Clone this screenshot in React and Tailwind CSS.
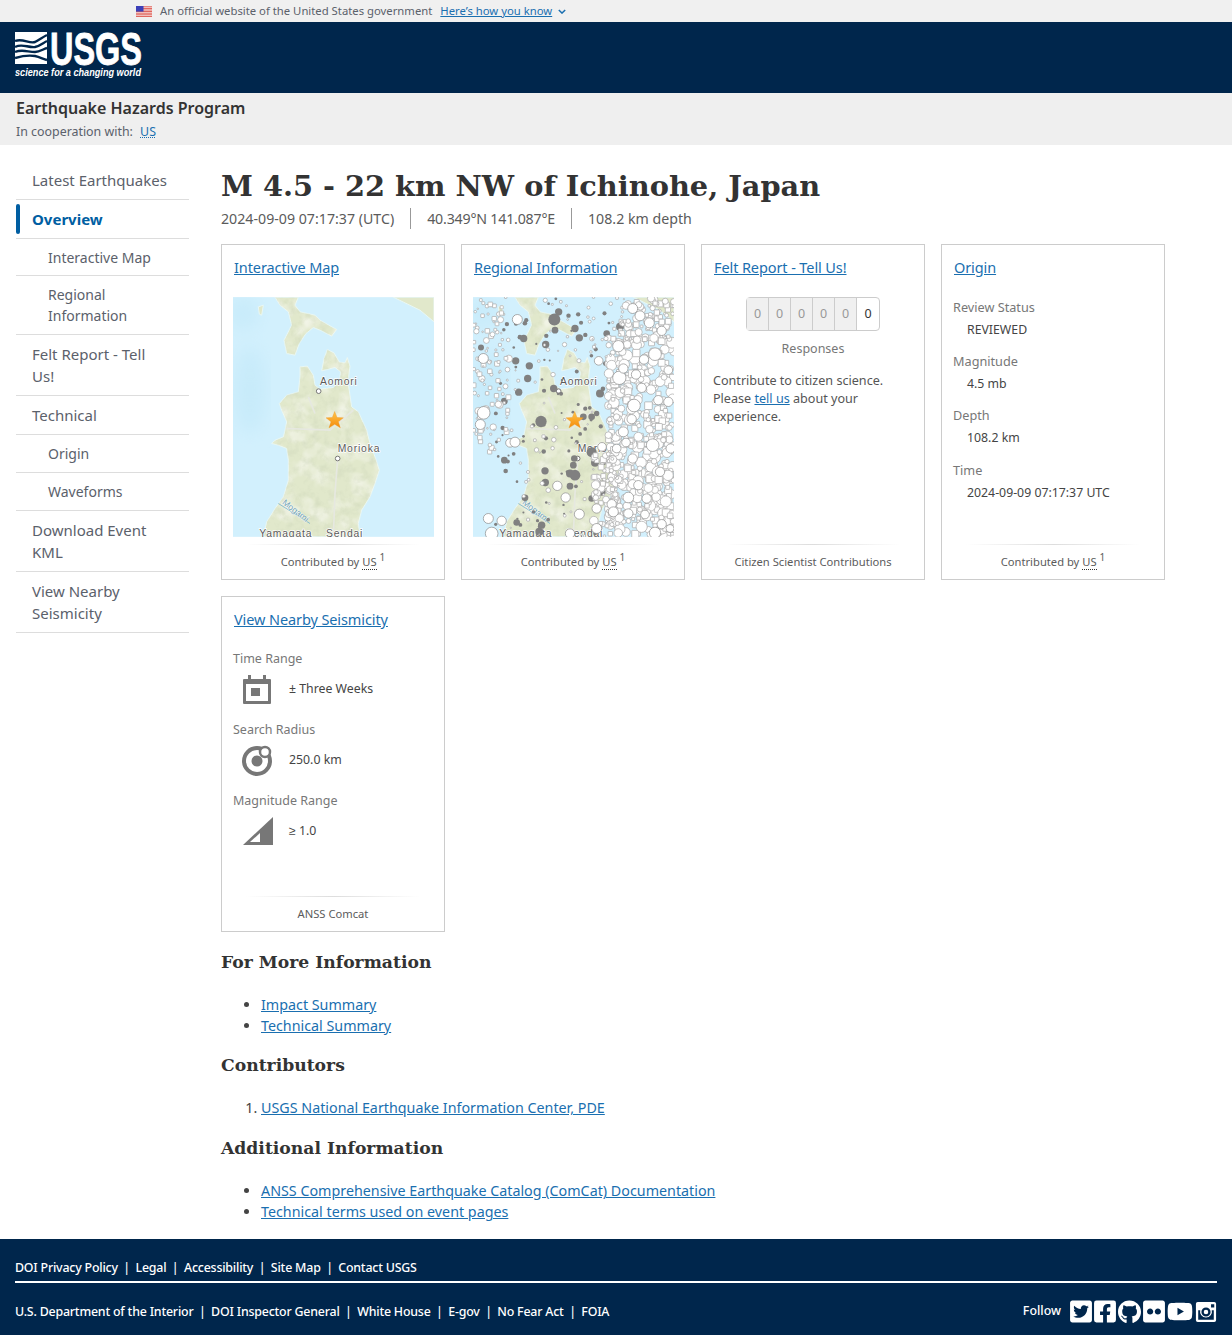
import { FaTwitterSquare, FaFacebookSquare, FaGithub, FaFlickr, FaYoutube } from 'react-icons/fa'

const sans = 'font-["Noto_Sans",sans-serif]'

// small seeded generator so the catalog dots stay the same on every load
let seed = 7
const rnd = () => {
  seed = (seed * 16807) % 2147483647
  return seed / 2147483647
}
const between = (a, b) => a + rnd() * (b - a)

const fillerWhite = []
const scatter = (count, x0, x1, y0, y1, r0, r1, squares) => {
  for (let i = 0; i < count; i++) {
    const square = rnd() < squares
    const r = between(r0, r1)
    fillerWhite.push([between(x0, x1), between(y0, y1), square ? r * 0.7 : r, square])
  }
}
scatter(520, 445, 642, 290, 890, 6, 17, 0.4)
scatter(90, 480, 642, 171, 300, 4, 13, 0.5)
scatter(90, 400, 480, 640, 890, 4, 13, 0.5)
scatter(110, 39, 150, 171, 640, 3, 11, 0.7)
scatter(35, 250, 500, 171, 350, 2, 7, 0.5)
scatter(40, 150, 400, 350, 890, 2, 7, 0.6)

const fillerGray = []
for (let i = 0; i < 85; i++) fillerGray.push([between(100, 470), between(175, 880), between(3, 7)])

const grayDots = [
  [283, 238, 18], [296, 215, 11], [191, 295, 11], [257, 313, 11], [345, 265, 11], [358, 293, 11], [285, 270, 10],
  [167, 362, 11], [208, 377, 11], [203, 415, 11], [176, 456, 11], [63, 322, 9], [133, 483, 10], [281, 445, 11],
  [243, 544, 17], [133, 660, 10], [395, 636, 15], [345, 705, 16], [330, 700, 12], [343, 655, 10], [340, 675, 10],
  [405, 668, 12], [430, 665, 10], [255, 692, 11], [256, 727, 11], [330, 738, 10], [245, 855, 11], [238, 875, 12],
  [170, 847, 10], [195, 773, 10], [395, 775, 10], [425, 755, 12], [463, 443, 15], [420, 460, 12], [370, 530, 10],
  [395, 530, 10], [410, 520, 8], [480, 260, 12], [440, 280, 10],
]

const whiteDots = [
  [172, 238, 15], [71, 518, 19], [61, 553, 15], [70, 355, 15], [150, 608, 13], [165, 606, 15], [518, 205, 15],
  [540, 227, 15], [568, 248, 15], [605, 272, 14], [475, 318, 17], [585, 342, 19], [552, 358, 14], [478, 413, 20],
  [490, 385, 14], [528, 403, 14], [522, 496, 19], [545, 443, 14], [595, 480, 14], [625, 485, 14], [515, 537, 14],
  [490, 575, 15], [578, 615, 19], [498, 607, 13], [470, 625, 13], [518, 655, 14], [600, 695, 14], [535, 735, 14],
  [560, 775, 14], [505, 772, 16], [455, 792, 14], [460, 815, 15], [505, 820, 14], [555, 823, 13], [605, 852, 14],
  [585, 878, 17], [630, 865, 12], [410, 805, 14], [358, 822, 15], [330, 880, 14], [410, 865, 15], [85, 835, 15],
  [125, 842, 14], [95, 880, 19], [292, 737, 14], [317, 772, 14], [426, 620, 13], [416, 362, 13], [632, 625, 14],
  [625, 390, 13],
]

const honshu =
  'M240 380 262 378 280 405 285 435 300 447 340 442 358 425 362 395 345 382 305 392 312 355 322 328 342 338 358 366 375 368 382 352 390 378 384 425 395 500 415 515 440 570 450 610 465 650 478 690 465 730 450 770 425 810 415 850 420 890 130 890 140 845 165 805 190 770 205 720 205 660 200 625 175 615 155 610 165 600 190 590 195 570 200 545 185 510 178 490 200 465 235 455 240 410Z'
const hokkaido =
  'M165 171 235 171 225 195 240 215 285 225 300 240 350 268 335 288 305 272 280 262 258 280 238 310 225 345 200 340 192 300 215 255 205 215 180 195Z'

function QuakeMap({ id, seismicity }) {
  return (
    <svg viewBox="39 171 603 719" className="block w-[201px] h-[240px] mx-auto">
      <defs>
        <clipPath id={`land-${id}`}>
          <path d={honshu} />
          <path d={hokkaido} />
        </clipPath>
        <filter id={`terrain-${id}`}>
          <feTurbulence type="fractalNoise" baseFrequency="0.04" numOctaves="4" seed="4" />
          <feColorMatrix values="0 0 0 0 0.6  0 0 0 0 0.66  0 0 0 0 0.48  1.1 0 0 0 -0.5" />
        </filter>
        <filter id={`pale-${id}`}>
          <feTurbulence type="fractalNoise" baseFrequency="0.018" numOctaves="3" seed="11" />
          <feColorMatrix values="0 0 0 0 0.96  0 0 0 0 0.96  0 0 0 0 0.92  1.6 0 0 0 -0.7" />
        </filter>
        <filter id={`soft-${id}`}>
          <feGaussianBlur stdDeviation="26" />
        </filter>
        <filter id={`edge-${id}`}>
          <feGaussianBlur stdDeviation="1.5" />
        </filter>
        <linearGradient id={`star-${id}`} x1="0" y1="0" x2="0" y2="1">
          <stop offset="0" stopColor="#ffc64a" />
          <stop offset="1" stopColor="#f58a0b" />
        </linearGradient>
      </defs>
      <rect x="39" y="171" width="603" height="719" fill="#d2f0fd" />
      <g filter={`url(#soft-${id})`} fill="#c8ebfa">
        <ellipse cx="90" cy="450" rx="50" ry="130" />
        <ellipse cx="70" cy="220" rx="45" ry="50" />
      </g>
      <g filter={`url(#edge-${id})`} fill="#e1e8cb" stroke="#e8f7f4" strokeWidth="3">
        <path d={hokkaido} />
        <path d="M520 171 642 171 642 245 600 210Z" />
        <path d="M115 200 130 195 125 225 118 222Z" />
        <path d={honshu} />
      </g>
      <g clipPath={`url(#land-${id})`}>
        <rect x="39" y="171" width="603" height="719" filter={`url(#pale-${id})`} />
        <rect x="39" y="171" width="603" height="719" filter={`url(#terrain-${id})`} />
        <path d="M353 655 345 760 340 890M200 565 330 570 400 510M265 470 285 520" stroke="#e6e8e0" strokeWidth="5" fill="none" />
      </g>
      <path d="M175 790 215 815 270 850" stroke="#8dbfd0" strokeWidth="3" fill="none" />
      <g fontFamily="'Liberation Sans',sans-serif" fontSize="31" fill="#5a5a5a" stroke="#fff" strokeWidth="4" paintOrder="stroke" letterSpacing="2.5">
        <text x="300" y="435">Aomori</text>
        <text x="353" y="637">Morioka</text>
        <text x="118" y="892">Yamagata</text>
        <text x="318" y="892">Sendai</text>
      </g>
      <text x="185" y="790" transform="rotate(38 185 790)" fontFamily="'Liberation Sans',sans-serif" fontSize="26" fill="#6d9fb3" stroke="#fff" strokeWidth="2" paintOrder="stroke">Mogami</text>
      <circle cx="296" cy="453" r="7" fill="#fff" stroke="#777" strokeWidth="3" />
      <circle cx="353" cy="655" r="7" fill="#fff" stroke="#777" strokeWidth="3" />
      {seismicity && (
        <g>
          {fillerGray.map(([x, y, r], i) => (
            <circle key={i} cx={x} cy={y} r={r} fill="#808080" />
          ))}
          {grayDots.map(([x, y, r], i) => (
            <circle key={i} cx={x} cy={y} r={r} fill="#808080" />
          ))}
          {fillerWhite.map(([x, y, r, square], i) =>
            square ? (
              <rect key={i} x={x - r} y={y - r} width={r * 2} height={r * 2} rx="1.5" fill="#fff" stroke="#a5a5a5" strokeWidth="2" />
            ) : (
              <circle key={i} cx={x} cy={y} r={r} fill="#fff" stroke="#a5a5a5" strokeWidth="2" />
            ),
          )}
          {whiteDots.map(([x, y, r], i) => (
            <circle key={i} cx={x} cy={y} r={r} fill="#fff" stroke="#888" strokeWidth="2" />
          ))}
        </g>
      )}
      <path d="M344 514 351 532 370 533 355 545 361 563 344 552 327 563 333 545 318 533 337 532Z" fill={`url(#star-${id})`} stroke="#e98f1c" strokeWidth="1" />
    </svg>
  )
}

function Card({ title, footer, children }) {
  return (
    <div className="w-[224px] h-[336px] border border-[#cccccc] flex flex-col">
      <a href="#" className="ml-3 mt-[11px] text-[#1a6fb0] underline text-[14.5px] tracking-[-0.1px] leading-[22px]">{title}</a>
      <div className="flex-1 mt-[19px] px-[11px]">{children}</div>
      <div className="mx-6 h-px bg-gradient-to-r from-transparent via-[#dddddd] to-transparent" />
      <div className="h-[34px] flex items-center justify-center text-[11.2px] text-[#5b5b5b] pt-[1px]">{footer}</div>
    </div>
  )
}

function ContributedBy() {
  return (
    <span>
      Contributed by <abbr className="no-underline border-b border-dotted border-[#333]" title="US">US</abbr>
      <sup className="ml-[3px] text-[10px]">1</sup>
    </span>
  )
}

function Nav({ sub, active, tight, children }) {
  return (
    <a
      href="#"
      className={`relative block border-b border-[#dddddd] pr-[20px] ${sub ? `pl-8 pt-[8px] text-[14px] leading-[21px] ${tight ? 'pb-[7px]' : 'pb-[8px]'}` : 'pl-4 py-[8px] text-[15px] leading-[22px]'} ${active ? 'font-bold text-[#005ea2]' : 'text-[#5b616b]'}`}
    >
      {active && <span className="absolute left-0 top-1 bottom-1 w-1 rounded-sm bg-[#005ea2]" />}
      {children}
    </a>
  )
}

function Stat({ label, value, top }) {
  return (
    <div className={top}>
      <div className="text-[#777777] text-[12.7px] leading-[18px]">{label}</div>
      <div className="text-[#444444] text-[12.3px] leading-[18px] mt-[5px] pl-[14px]">{value}</div>
    </div>
  )
}

function SectionLink({ children }) {
  return <a href="#" className="text-[#1a6fb0] underline">{children}</a>
}

function Heading({ children, className }) {
  return <h2 className={`font-["DejaVu_Serif",serif] font-bold text-[#333333] text-[17.2px] leading-[26px] ${className}`}>{children}</h2>
}

function FooterLinks({ items }) {
  return (
    <div className="flex items-center text-white text-[12.4px] leading-[18px] font-medium tracking-[-0.2px]">
      {items.map((t, i) => (
        <span key={t} className="flex items-center">
          {i > 0 && <span className="mx-[5.5px]">|</span>}
          <a href="#">{t}</a>
        </span>
      ))}
    </div>
  )
}

export default function App() {
  return (
    <div className={`${sans} bg-white min-h-screen`}>
      {/* gov banner */}
      <div className="h-[22px] bg-[#f0f0f0] flex items-center pl-[136px] text-[11.3px] text-[#5b616b]">
        <svg viewBox="0 0 16 11" className="w-4 h-[11px] mr-2">
          <rect width="16" height="11" fill="#fff" />
          <path d="M0 .8h16M0 2.4h16M0 4h16M0 5.6h16M0 7.2h16M0 8.8h16M0 10.4h16" stroke="#d8433a" strokeWidth="0.9" />
          <rect width="7.5" height="5.6" fill="#3b3fb8" />
        </svg>
        <span>An official website of the United States government</span>
        <a href="#" className="ml-2 text-[#1a6fb0] underline">Here’s how you know</a>
        <svg viewBox="0 0 10 6" className="w-[8px] h-[5px] ml-[6px]" fill="none" stroke="#1a6fb0" strokeWidth="1.8">
          <path d="M1 1l4 4 4-4" />
        </svg>
      </div>

      {/* usgs header */}
      <div className="h-[71px] bg-[#00264c] pl-[15px] pt-[9px]">
        <svg viewBox="0 0 127 47" className="w-[127px] h-[47px]">
          <rect x="0" y="1" width="32" height="32" fill="#fff" />
          <g fill="none" stroke="#00264c" strokeWidth="2.4">
            <path d="M0 10C8 7 14 13 20 11 24 9 28 6 32 4" />
            <path d="M0 16C7 12 13 17 20 16 25 15 28 12 32 10" />
            <path d="M0 21C7 18 13 21 20 21 25 21 28 18 32 17" />
            <path d="M0 27C7 25 13 24 20 25 25 26 28 28 32 29" />
          </g>
          <text x="35" y="33.5" textLength="92" lengthAdjust="spacingAndGlyphs" fontFamily="'Liberation Sans',sans-serif" fontWeight="700" fontSize="46" fill="#fff" stroke="#fff" strokeWidth="0.8">USGS</text>
          <text x="0" y="45" textLength="126" lengthAdjust="spacingAndGlyphs" fontFamily="'Liberation Sans',sans-serif" fontWeight="700" fontStyle="italic" fontSize="10.5" fill="#fff">science for a changing world</text>
        </svg>
      </div>

      {/* section title */}
      <div className="h-[52px] bg-[#efefef] pl-4 pt-[5px]">
        <div className="text-[#333333] font-semibold text-[16px] leading-[21px]">Earthquake Hazards Program</div>
        <div className="text-[#5b616b] text-[12.4px] leading-[18px] mt-[4px]">
          In cooperation with: <a href="#" className="ml-1 text-[#1a6fb0] underline decoration-dotted">US</a>
        </div>
      </div>

      <div className="flex pl-4 pt-4 h-[1094px]">
        {/* sidebar */}
        <nav className="w-[173px] shrink-0">
          <Nav>Latest Earthquakes</Nav>
          <Nav active>Overview</Nav>
          <Nav sub tight>Interactive Map</Nav>
          <Nav sub>Regional Information</Nav>
          <Nav>Felt Report - Tell Us!</Nav>
          <Nav>Technical</Nav>
          <Nav sub>Origin</Nav>
          <Nav sub>Waveforms</Nav>
          <Nav>Download Event KML</Nav>
          <Nav>View Nearby Seismicity</Nav>
        </nav>

        <main className="ml-8 flex-1 text-[#444444]">
          <h1 className='font-["DejaVu_Serif",serif] font-bold text-[#333333] text-[28.8px] leading-[40px] mt-[5px] whitespace-nowrap'>
            M 4.5 - 22 km NW of Ichinohe, Japan
          </h1>
          <div className="flex items-center text-[14.2px] text-[#5b5b5b] leading-[21px] mt-[2px]">
            <span>2024-09-09 07:17:37 (UTC)</span>
            <span className="mx-4 h-[21px] w-px bg-[#999999]" />
            <span className="tracking-[-0.2px]">40.349°N 141.087°E</span>
            <span className="mx-4 h-[21px] w-px bg-[#999999]" />
            <span>108.2 km depth</span>
          </div>

          <div className="flex flex-wrap gap-4 mt-[15px]">
            <Card title="Interactive Map" footer={<ContributedBy />}>
              <QuakeMap id="a" />
            </Card>
            <Card title="Regional Information" footer={<ContributedBy />}>
              <QuakeMap id="b" seismicity />
            </Card>
            <Card title="Felt Report - Tell Us!" footer="Citizen Scientist Contributions">
              <div className="flex justify-center">
                <div className="flex h-[34px] border border-[#cccccc] rounded-sm divide-x divide-[#cccccc] text-[12.5px]">
                  {[0, 0, 0, 0, 0].map((n, i) => (
                    <span key={i} className="w-[22px] flex items-center justify-center bg-[#f0f0f0] text-[#999999]">{n}</span>
                  ))}
                  <span className="w-[22px] flex items-center justify-center text-[#333333]">0</span>
                </div>
              </div>
              <div className="text-center text-[12.5px] leading-[18px] text-[#777777] mt-[9px]">Responses</div>
              <p className="text-[12.6px] leading-[18px] text-[#555555] mt-[14px]">
                Contribute to citizen science. Please <a href="#" className="text-[#1a6fb0] underline">tell us</a> about your experience.
              </p>
            </Card>
            <Card title="Origin" footer={<ContributedBy />}>
              <Stat label="Review Status" value="REVIEWED" top="mt-[1px]" />
              <Stat label="Magnitude" value="4.5 mb" top="mt-[13px]" />
              <Stat label="Depth" value="108.2 km" top="mt-[13px]" />
              <Stat label="Time" value="2024-09-09 07:17:37 UTC" top="mt-[14px]" />
            </Card>
            <Card title="View Nearby Seismicity" footer="ANSS Comcat">
              <div className="text-[#777777] text-[12.5px] leading-[18px] mt-[1px]">Time Range</div>
              <div className="flex items-center h-[38px] mt-[2px] text-[12.3px] text-[#444444]">
                <svg viewBox="0 0 28 30" className="w-[28px] h-[30px] ml-[10px] mr-[18px]">
                  <path d="M1 5h26a1 1 0 0 1 1 1v23a1 1 0 0 1-1 1H1a1 1 0 0 1-1-1V6a1 1 0 0 1 1-1z" fill="#777" />
                  <rect x="5" y="1" width="3" height="6" fill="#777" />
                  <rect x="20" y="1" width="3" height="6" fill="#777" />
                  <rect x="3" y="10" width="22" height="17" fill="#fff" />
                  <rect x="8" y="14" width="9" height="8" fill="#777" />
                </svg>
                ± Three Weeks
              </div>
              <div className="text-[#777777] text-[12.5px] leading-[18px] mt-[13px]">Search Radius</div>
              <div className="flex items-center h-[38px] mt-[2px] text-[12.3px] text-[#444444]">
                <svg viewBox="0 0 32 32" className="w-[32px] h-[32px] ml-[8px] mr-[16px]">
                  <circle cx="16" cy="17" r="13" fill="none" stroke="#777" strokeWidth="4" />
                  <circle cx="16" cy="17" r="5.5" fill="#777" />
                  <circle cx="24" cy="8" r="5" fill="#fff" stroke="#777" strokeWidth="2.5" />
                </svg>
                250.0 km
              </div>
              <div className="text-[#777777] text-[12.5px] leading-[18px] mt-[13px]">Magnitude Range</div>
              <div className="flex items-center h-[38px] mt-[2px] text-[12.3px] text-[#444444]">
                <svg viewBox="0 0 30 28" className="w-[30px] h-[28px] ml-[10px] mr-[16px]">
                  <path d="M30 0V28H0Z" fill="#777" />
                  <path d="M17 16V25H7Z" fill="#fff" />
                </svg>
                ≥ 1.0
              </div>
            </Card>
          </div>

          <div className="text-[14.3px] leading-[21px]">
            <Heading className="mt-[17px]">For More Information</Heading>
            <ul className="list-disc pl-10 mt-[19px]">
              <li><SectionLink>Impact Summary</SectionLink></li>
              <li><SectionLink>Technical Summary</SectionLink></li>
            </ul>
            <Heading className="mt-[16px]">Contributors</Heading>
            <ol className="list-decimal pl-10 mt-[19px]">
              <li><SectionLink>USGS National Earthquake Information Center, PDE</SectionLink></li>
            </ol>
            <Heading className="mt-[17px]">Additional Information</Heading>
            <ul className="list-disc pl-10 mt-[19px]">
              <li><SectionLink>ANSS Comprehensive Earthquake Catalog (ComCat) Documentation</SectionLink></li>
              <li><SectionLink>Technical terms used on event pages</SectionLink></li>
            </ul>
          </div>
        </main>
      </div>

      {/* footer */}
      <footer className="h-[96px] bg-[#00264c] px-[15px] pt-[20px]">
        <FooterLinks items={['DOI Privacy Policy', 'Legal', 'Accessibility', 'Site Map', 'Contact USGS']} />
        <div className="h-[2px] bg-white mt-[4px]" />
        <div className="flex items-center justify-between mt-[16px]">
          <FooterLinks items={['U.S. Department of the Interior', 'DOI Inspector General', 'White House', 'E-gov', 'No Fear Act', 'FOIA']} />
          <div className="flex items-center text-white gap-[2px] text-[12.4px] font-medium">
            <span className="mr-[7px]">Follow</span>
            <FaTwitterSquare className="w-[22px] h-[25px]" />
            <FaFacebookSquare className="w-[22px] h-[25px]" />
            <FaGithub className="w-[23px] h-[24px]" />
            <FaFlickr className="w-[22px] h-[25px]" />
            <FaYoutube className="w-[26px] h-[25px]" />
            <svg viewBox="0 0 24 24" className="w-[22px] h-[24px]" fill="#fff">
              <path fillRule="evenodd" d="M3 1h18a2 2 0 0 1 2 2v18a2 2 0 0 1-2 2H3a2 2 0 0 1-2-2V3a2 2 0 0 1 2-2zm14.5 2.5v3.5H21V3.5zM12 7a5 5 0 1 0 0 10 5 5 0 0 0 0-10zm0 2.5a2.5 2.5 0 1 1 0 5 2.5 2.5 0 0 1 0-5zM3.5 10v10.5h17V10h-2.2a6.5 6.5 0 1 1-12.6 0z" />
            </svg>
          </div>
        </div>
      </footer>
    </div>
  )
}
